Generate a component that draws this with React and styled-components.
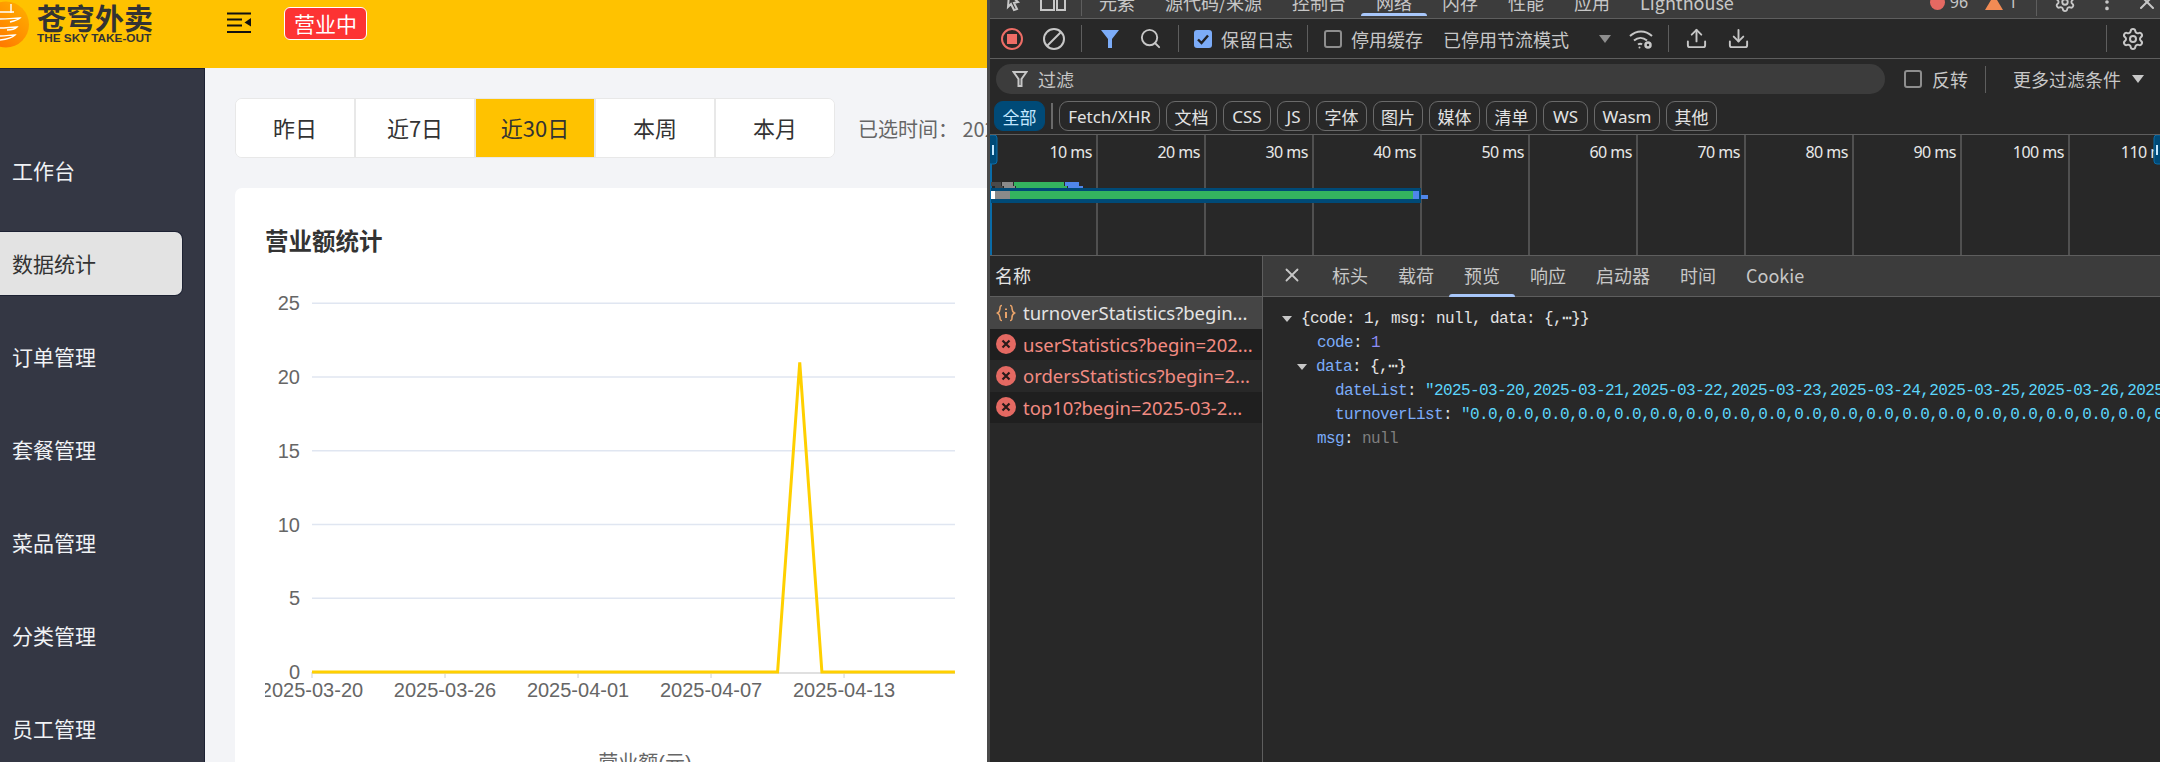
import React from "react";
import styled, { createGlobalStyle } from "styled-components";
import { Search, Settings, Upload, Download, X, EllipsisVertical } from "lucide-react";

const UI_FONT = `"Noto Sans", "Noto Sans CJK SC", sans-serif`;
const CJK_FONT = `"Noto Sans CJK SC", "Noto Sans", sans-serif`;

const GlobalStyle = createGlobalStyle`
  html, body {
    margin: 0;
    padding: 0;
    background: #282828;
    overflow: hidden;
  }
  * {
    box-sizing: border-box;
  }
`;

const Page = styled.div`
  display: flex;
  width: 2160px;
  height: 762px;
  overflow: hidden;
  font-family: ${CJK_FONT};
`;

/* ---------- left: the admin page ---------- */

const AdminApp = styled.div`
  width: 987px;
  height: 762px;
  flex: none;
  display: flex;
  flex-direction: column;
  overflow: hidden;
  background: #f3f4f7;
`;

const TopBar = styled.header`
  height: 68px;
  flex: none;
  display: flex;
  align-items: flex-start;
  background: #ffc200;
`;

const LogoMark = styled.svg`
  width: 30px;
  height: 48px;
  flex: none;
`;

const LogoText = styled.div`
  margin: 3px 0 0 7px;
  width: 119px;
  flex: none;
  color: #333;
`;

const LogoName = styled.div`
  font-size: 29px;
  line-height: 29px;
  font-weight: 700;
  white-space: nowrap;
`;

const LogoSub = styled.div`
  font-family: "Liberation Sans", sans-serif;
  font-size: 11.8px;
  line-height: 12px;
  font-weight: 700;
  white-space: nowrap;
`;

const MenuToggle = styled.svg`
  width: 24px;
  height: 22px;
  margin: 12px 0 0 71px;
  flex: none;
`;

const StatusBadge = styled.div`
  margin: 7px 0 0 33px;
  width: 83px;
  height: 33px;
  flex: none;
  display: flex;
  align-items: center;
  justify-content: center;
  padding-bottom: 1px;
  background: #fd3333;
  border: 1px solid #fff;
  border-radius: 6px;
  color: #fff;
  font-size: 21px;
`;

const AdminBody = styled.div`
  flex: 1;
  display: flex;
  min-height: 0;
`;

const Sidebar = styled.nav`
  width: 205px;
  flex: none;
  padding-top: 70px;
  background: #343744;
  border-top: 1px solid #1d2233;
  border-right: 1px solid #1d2233;
  overflow: hidden;
`;

const NavItem = styled.div`
  width: 182px;
  height: 63px;
  margin-bottom: 30px;
  padding: 0 0 2px 12px;
  display: flex;
  align-items: center;
  font-size: 21px;
  color: ${(p) => (p.$active ? "#333" : "#f0f2f5")};
  background: ${(p) => (p.$active ? "#e3e3e3" : "transparent")};
  border-radius: ${(p) => (p.$active ? "0 7px 7px 0" : "0")};
  box-shadow: ${(p) => (p.$active ? "0 0 0 1px #1d2233" : "none")};
`;

const Main = styled.main`
  flex: 1;
  min-width: 0;
  padding: 30px 0 0 30px;
  overflow: hidden;
`;

const RangeRow = styled.div`
  display: flex;
  align-items: center;
  height: 60px;
  white-space: nowrap;
`;

const RangeTabs = styled.div`
  display: flex;
  width: 600px;
  height: 60px;
  flex: none;
  background: #fff;
  border: 1px solid #e8e8e8;
  border-radius: 7px;
  overflow: hidden;
`;

const RangeTab = styled.div`
  flex: 1;
  display: flex;
  align-items: center;
  justify-content: center;
  padding-bottom: 2px;
  font-size: 22px;
  color: #333;
  background: ${(p) => (p.$active ? "#ffc200" : "#fff")};
  border-left: ${(p) => (p.$first ? "none" : "2px solid #e8e8e8")};
`;

const RangeLabel = styled.div`
  margin-left: 23px;
  font-size: 20px;
  color: #666;
`;

const Card = styled.section`
  margin-top: 30px;
  height: 600px;
  padding: 40px 0 0 30px;
  background: #fff;
  border-radius: 7px 0 0 0;
`;

const CardTitle = styled.h2`
  margin: 0 0 13px;
  font-size: 23.5px;
  line-height: 24px;
  font-weight: 700;
  color: #333;
`;

const ChartSvg = styled.svg`
  display: block;
  width: 722px;
  height: 497px;
`;

const AxisText = styled.text`
  font-family: "Liberation Sans", "Noto Sans CJK SC", sans-serif;
  font-size: 20px;
  fill: #666;
`;

/* ---------- right: devtools ---------- */

const DevTools = styled.div`
  flex: 1;
  min-width: 0;
  height: 762px;
  display: flex;
  flex-direction: column;
  border-left: 3px solid #4a4a4a;
  background: #282828;
  color: #e3e3e3;
  font-family: ${CJK_FONT};
  font-size: 18px;
`;

const PanelBar = styled.div`
  height: 19px;
  flex: none;
  overflow: hidden;
  background: #3c3c3c;
  border-bottom: 1px solid #5e5e5e;
`;

const PanelBarInner = styled.div`
  display: flex;
  align-items: center;
  height: 28px;
  margin-top: -12px;
  padding-right: 18px;
  white-space: nowrap;
`;

const PanelGlyph = styled.span`
  width: ${(p) => p.$w}px;
  flex: none;
  display: flex;
  justify-content: center;
  color: #c7c7c7;
`;

const PanelTab = styled.div`
  position: relative;
  height: 28px;
  flex: none;
  padding: 0 15px;
  display: flex;
  align-items: center;
  color: #c7c7c7;
  font-size: 18px;
  &::after {
    content: "";
    display: ${(p) => (p.$active ? "block" : "none")};
    position: absolute;
    left: 0;
    right: 0;
    bottom: 0;
    height: 3px;
    border-radius: 3px 3px 0 0;
    background: #a8c7fa;
  }
`;

const Counter = styled.span`
  display: inline-flex;
  align-items: center;
  gap: 5px;
  font-family: ${UI_FONT};
  font-size: 16px;
  color: #c7c7c7;
  margin-left: ${(p) => p.$ml}px;
`;

const Toolbar = styled.div`
  height: 40px;
  flex: none;
  display: flex;
  align-items: center;
  padding: 0 6px 0 1px;
  border-bottom: 1px solid #5e5e5e;
  white-space: nowrap;
`;

const ToolButton = styled.span`
  width: ${(p) => p.$w || 42}px;
  height: 30px;
  flex: none;
  margin-left: ${(p) => p.$ml || 0}px;
  display: flex;
  align-items: center;
  justify-content: center;
  color: #c7c7c7;
`;

const ToolSep = styled.span`
  width: 1px;
  height: 27px;
  flex: none;
  background: #5e5e5e;
  margin: 0 ${(p) => p.$mr ?? 7}px 0 ${(p) => p.$ml ?? 7}px;
`;

const ToolSpacer = styled.span`
  flex: 1;
`;

const CheckField = styled.span`
  display: inline-flex;
  align-items: center;
  gap: ${(p) => p.$gap || 9}px;
  margin-left: ${(p) => p.$ml || 0}px;
  color: #c7c7c7;
  font-size: 18px;
`;

const CheckBox = styled.span`
  width: 18px;
  height: 18px;
  flex: none;
  display: flex;
  align-items: center;
  justify-content: center;
  border-radius: 3px;
  border: ${(p) => (p.$checked ? "none" : "2px solid #8e8e8e")};
  background: ${(p) => (p.$checked ? "#7cacf8" : "transparent")};
`;

const ToolText = styled.span`
  margin-left: ${(p) => p.$ml || 0}px;
  color: #c7c7c7;
`;

const DownCaret = styled.span`
  width: 0;
  height: 0;
  flex: none;
  margin-left: ${(p) => p.$ml}px;
  border-left: 6px solid transparent;
  border-right: 6px solid transparent;
  border-top: 8px solid ${(p) => p.$color};
`;

const FilterRow = styled.div`
  height: 40px;
  flex: none;
  display: flex;
  align-items: center;
  padding: 0 0 0 6px;
  white-space: nowrap;
`;

const FilterInput = styled.div`
  width: 889px;
  height: 30px;
  flex: none;
  display: flex;
  align-items: center;
  gap: 10px;
  padding-left: 16px;
  border-radius: 15px;
  background: #3c3c3c;
  color: #c7c7c7;
`;

const ChipRow = styled.div`
  height: 36px;
  flex: none;
  display: flex;
  align-items: flex-start;
  gap: 6px;
  padding: 2px 0 0 4px;
  border-bottom: 1px solid #5e5e5e;
`;

const Chip = styled.span`
  width: ${(p) => p.$w}px;
  height: 30px;
  flex: none;
  display: flex;
  align-items: center;
  justify-content: center;
  border-radius: 9px;
  font-family: ${UI_FONT};
  font-size: 17px;
  white-space: nowrap;
  color: ${(p) => (p.$active ? "#c2e7ff" : "#e3e3e3")};
  background: ${(p) => (p.$active ? "#004a77" : "transparent")};
  border: 1px solid ${(p) => (p.$active ? "#004a77" : "#6a6a6a")};
`;

const ChipSep = styled.span`
  width: 2px;
  height: 26px;
  margin-top: 2px;
  flex: none;
  background: #6a6a6a;
`;

const Overview = styled.div`
  position: relative;
  height: 121px;
  flex: none;
  display: flex;
  overflow: hidden;
  border-bottom: 1px solid #5e5e5e;
`;

const OverviewCol = styled.div`
  width: 108px;
  flex: none;
  padding: 5px 4px 0 0;
  text-align: right;
  font-family: ${UI_FONT};
  font-size: 16px;
  letter-spacing: -0.5px;
  line-height: 24px;
  color: #e8e8e8;
  border-right: 2px solid #505050;
  white-space: nowrap;
`;

const OverviewBars = styled.svg`
  position: absolute;
  left: 0;
  top: 0;
  width: 1170px;
  height: 121px;
`;

const Split = styled.div`
  flex: 1;
  min-height: 0;
  display: flex;
`;

const RequestPane = styled.div`
  width: 273px;
  flex: none;
  border-right: 1px solid #5e5e5e;
`;

const RequestHead = styled.div`
  height: 41px;
  padding: 0 0 3px 5px;
  display: flex;
  align-items: center;
  border-bottom: 1px solid #5e5e5e;
  color: #e3e3e3;
`;

const RequestRow = styled.div`
  height: 31.5px;
  display: flex;
  align-items: center;
  gap: 7px;
  padding-left: 6px;
  font-family: ${UI_FONT};
  font-size: 18.5px;
  white-space: nowrap;
  overflow: hidden;
  color: ${(p) => (p.$error ? "#f28b82" : "#e3e3e3")};
  background: ${(p) => p.$bg};
`;

const RequestIcon = styled.svg`
  width: 20px;
  height: 20px;
  flex: none;
`;

const DetailPane = styled.div`
  flex: 1;
  min-width: 0;
  overflow: hidden;
`;

const DetailTabs = styled.div`
  height: 41px;
  display: flex;
  align-items: stretch;
  background: #3c3c3c;
  border-bottom: 1px solid #5e5e5e;
`;

const DetailClose = styled.span`
  width: 54px;
  padding: 0 0 3px 3px;
  display: flex;
  align-items: center;
  justify-content: center;
  color: #c7c7c7;
`;

const DetailTab = styled.div`
  position: relative;
  padding: 0 15px 3px;
  display: flex;
  align-items: center;
  color: #c7c7c7;
  font-size: 18px;
  &::after {
    content: "";
    display: ${(p) => (p.$active ? "block" : "none")};
    position: absolute;
    left: 0;
    right: 0;
    bottom: -1px;
    height: 3px;
    border-radius: 3px 3px 0 0;
    background: #a8c7fa;
  }
`;

const Preview = styled.div`
  padding-top: 10px;
  font-family: "Liberation Mono", monospace;
  font-size: 16px;
  letter-spacing: -0.6px;
  line-height: 24px;
`;

const PreviewLine = styled.div`
  display: flex;
  align-items: center;
  height: 24px;
  padding-left: ${(p) => p.$indent}px;
  white-space: pre;
  color: #e3e3e3;
`;

const Fold = styled.span`
  width: 0;
  height: 0;
  flex: none;
  margin-left: -20px;
  margin-right: 9px;
  border-left: 5.5px solid transparent;
  border-right: 5.5px solid transparent;
  border-top: 6px solid #c7c7c7;
`;

const Key = styled.span`
  color: #7cacf8;
`;

const Num = styled.span`
  color: #8d8df5;
`;

const Str = styled.span`
  color: #5cd5fb;
`;

const Nil = styled.span`
  color: #7f7f7f;
`;

const MENU = ["工作台", "数据统计", "订单管理", "套餐管理", "菜品管理", "分类管理", "员工管理"];
const RANGES = ["昨日", "近7日", "近30日", "本周", "本月"];
const PANELS = ["元素", "源代码/来源", "控制台", "网络", "内存", "性能", "应用", "Lighthouse"];
const CHIPS = [
  { label: "Fetch/XHR", w: 101 },
  { label: "文档", w: 51 },
  { label: "CSS", w: 48 },
  { label: "JS", w: 33 },
  { label: "字体", w: 51 },
  { label: "图片", w: 50 },
  { label: "媒体", w: 51 },
  { label: "清单", w: 51 },
  { label: "WS", w: 45 },
  { label: "Wasm", w: 66 },
  { label: "其他", w: 51 },
];
const DETAIL_TABS = ["标头", "载荷", "预览", "响应", "启动器", "时间", "Cookie"];
const REQUESTS = [
  { name: "turnoverStatistics?begin...", bg: "#454545" },
  { name: "userStatistics?begin=202...", bg: "#1f1f1f", error: true },
  { name: "ordersStatistics?begin=2...", bg: "#282828", error: true },
  { name: "top10?begin=2025-03-2...", bg: "#1f1f1f", error: true },
];

// 30 days from 03-20, same list the api returned
const DATES = Array.from({ length: 30 }, (_, i) => {
  const d = new Date(Date.UTC(2025, 2, 20 + i));
  return d.toISOString().slice(0, 10);
});

const chartX = (i) => 47 + i * 22.17;
const chartY = (v) => 407 - v * 14.75;
const linePoints = DATES.map((_, i) => `${chartX(i)},${chartY(i === 22 ? 21 : 0)}`).join(" ");

const RevenueChart = () => (
  <ChartSvg viewBox="0 0 722 497">
    {[5, 10, 15, 20, 25].map((v) => (
      <line key={v} x1="47" x2="690" y1={chartY(v)} y2={chartY(v)} stroke="#e0e6f1" strokeWidth="1.5" />
    ))}
    {[0, 5, 10, 15, 20, 25].map((v) => (
      <AxisText key={v} x="35" y={chartY(v) + 7} textAnchor="end">
        {v}
      </AxisText>
    ))}
    <line x1="47" x2="690" y1="408" y2="408" stroke="#e0e0e0" strokeWidth="2" />
    {[0, 6, 12, 18, 24].map((i) => (
      <g key={i}>
        <line x1={chartX(i)} x2={chartX(i)} y1="407" y2="413" stroke="#e0e0e0" strokeWidth="1.5" />
        <AxisText x={chartX(i)} y="432" textAnchor="middle">
          {DATES[i]}
        </AxisText>
      </g>
    ))}
    <polyline points={linePoints} fill="none" stroke="#ffd000" strokeWidth="3" />
    <AxisText x="380" y="505" textAnchor="middle">
      营业额(元)
    </AxisText>
  </ChartSvg>
);

const RecordIcon = () => (
  <svg width="24" height="24" viewBox="0 0 24 24">
    <circle cx="12" cy="12" r="10" fill="none" stroke="#ee6d66" strokeWidth="2" />
    <rect x="7" y="7" width="10" height="10" fill="#ee6d66" />
  </svg>
);

const ClearIcon = () => (
  <svg width="24" height="24" viewBox="0 0 24 24" fill="none" stroke="#c7c7c7" strokeWidth="2">
    <circle cx="12" cy="12" r="10" />
    <line x1="5" y1="19" x2="19" y2="5" />
  </svg>
);

const FunnelFilled = () => (
  <svg width="20" height="22" viewBox="0 0 20 22">
    <path d="M1 2h18l-7 9v9h-4v-9z" fill="#7cacf8" />
  </svg>
);

const FunnelOutline = () => (
  <svg width="16" height="18" viewBox="0 0 16 18" fill="none" stroke="#c7c7c7" strokeWidth="2">
    <path d="M1.5 2h13l-5 7v7h-3v-7z" />
  </svg>
);

const CheckMark = () => (
  <svg width="14" height="14" viewBox="0 0 14 14" fill="none" stroke="#202124" strokeWidth="2.4">
    <path d="M2 7.5l3.5 3.5L12 3.5" />
  </svg>
);

const WifiGear = () => (
  <svg width="26" height="26" viewBox="0 0 26 26" fill="none" stroke="#c7c7c7" strokeWidth="2">
    <path d="M2 10c6.500-6 15.500-6 22 0" />
    <path d="M6 14.500c4-3.500 9-3.500 13 0" />
    <path d="M10 18.500c1.500-1 3-1 4 0" />
    <circle cx="11.500" cy="21.500" r="1" fill="#c7c7c7" stroke="none" />
    <circle cx="20" cy="19" r="2.500" strokeWidth="2.500" />
  </svg>
);

const ErrorIcon = () => (
  <RequestIcon viewBox="0 0 20 20">
    <circle cx="10" cy="10" r="10" fill="#e46962" />
    <path d="M6.500 6.500l7 7M13.500 6.500l-7 7" stroke="#2a1b1a" strokeWidth="2.200" />
  </RequestIcon>
);

const JsonIcon = () => (
  <RequestIcon viewBox="0 0 20 20" fill="none" stroke="#e8a36a" strokeWidth="1.600">
    <path d="M6 2.500c-2 0-2 1-2 3s0 3-2.500 4.500C4 11.500 4 12.500 4 14.500s0 3 2 3" />
    <path d="M14 2.500c2 0 2 1 2 3s0 3 2.500 4.500c-2.500 1.500-2.500 2.500-2.500 4.500s0 3-2 3" />
    <path d="M10 9v6M10 5.500v1.500" strokeWidth="2" />
  </RequestIcon>
);

const OverviewGraph = () => (
  <OverviewBars viewBox="0 0 1170 121">
    <rect x="0" y="0" width="2" height="121" fill="#0a6ca8" />
    <rect x="-2" y="0" width="9" height="29" rx="3" fill="#004a77" stroke="#0a6ca8" />
    <rect x="2" y="10" width="2" height="10" fill="#c2e7ff" />
    <rect x="1164" y="0" width="9" height="29" rx="3" fill="#004a77" stroke="#0a6ca8" />
    <rect x="1166" y="10" width="2" height="10" fill="#c2e7ff" />

    <rect x="1" y="47" width="10" height="4" fill="#4a4a4a" />
    <rect x="12" y="47" width="11" height="4" fill="#8a8a8a" />
    <rect x="24" y="47" width="50" height="4" fill="#34b35f" />
    <rect x="75" y="47" width="14" height="4" fill="#4f86ea" />
    <rect x="5" y="51" width="8" height="3" fill="#4a4a4a" />
    <rect x="14" y="51" width="11" height="3" fill="#8a8a8a" />
    <rect x="26" y="51" width="51" height="3" fill="#34b35f" />
    <rect x="78" y="51" width="15" height="3" fill="#4f86ea" />

    <rect x="1" y="53" width="430" height="15" fill="#004a77" />
    <rect x="1" y="56" width="4" height="8" fill="#fff" />
    <rect x="5" y="56" width="15" height="8" fill="#8a8a8a" />
    <rect x="20" y="56" width="403" height="8" fill="#34b35f" />
    <rect x="423" y="56" width="6" height="8" fill="#4f86ea" />
    <rect x="431" y="60" width="7" height="4" fill="#4f86ea" />
  </OverviewBars>
);

const App = () => (
  <Page>
    <GlobalStyle />
    <AdminApp>
      <TopBar>
        <LogoMark viewBox="0 0 30 48">
          <defs>
            <linearGradient id="logoFill" x1="1" y1="0" x2="0" y2="1">
              <stop offset="0" stopColor="#ffb300" />
              <stop offset="1" stopColor="#ff6a00" />
            </linearGradient>
          </defs>
          <circle cx="6" cy="24.500" r="23" fill="url(#logoFill)" />
          <path
            d="M0 12h14M11 4v9M0 19c8 0 16-1 20-1-2 2-6 3-10 4M0 28c6 0 12-1 17-1-2 2-6 3-10 3M0 36c6 0 11-1 15-1-2 2-5 4-15 5"
            fill="none"
            stroke="#fff"
            strokeWidth="1.400"
          />
        </LogoMark>
        <LogoText>
          <LogoName>苍穹外卖</LogoName>
          <LogoSub>THE SKY TAKE-OUT</LogoSub>
        </LogoText>
        <MenuToggle viewBox="0 0 24 22">
          <rect x="0" y="0.500" width="24" height="2" fill="#111" />
          <rect x="0" y="6.500" width="15" height="2" fill="#111" />
          <rect x="0" y="12.500" width="15" height="2" fill="#111" />
          <rect x="0" y="19" width="24" height="2" fill="#111" />
          <path d="M24 6v8.500L17.500 10.500z" fill="#111" />
        </MenuToggle>
        <StatusBadge>营业中</StatusBadge>
      </TopBar>
      <AdminBody>
        <Sidebar>
          {MENU.map((m) => (
            <NavItem key={m} $active={m === "数据统计"}>
              {m}
            </NavItem>
          ))}
        </Sidebar>
        <Main>
          <RangeRow>
            <RangeTabs>
              {RANGES.map((r, i) => (
                <RangeTab key={r} $first={i === 0} $active={r === "近30日"}>
                  {r}
                </RangeTab>
              ))}
            </RangeTabs>
            <RangeLabel>已选时间： 2025-03-20 至 2025-04-18</RangeLabel>
          </RangeRow>
          <Card>
            <CardTitle>营业额统计</CardTitle>
            <RevenueChart />
          </Card>
        </Main>
      </AdminBody>
    </AdminApp>

    <DevTools>
      <PanelBar>
        <PanelBarInner>
          <PanelGlyph $w={42}>
            <svg width="22" height="22" viewBox="0 0 22 22" fill="none" stroke="#c7c7c7" strokeWidth="2">
              <path d="M9 3l9 8-4 1 3 6-3 1-3-6-3 3z" />
            </svg>
          </PanelGlyph>
          <PanelGlyph $w={42}>
            <svg width="26" height="20" viewBox="0 0 26 20" fill="none" stroke="#c7c7c7" strokeWidth="2">
              <rect x="1" y="2" width="13" height="16" />
              <rect x="17" y="6" width="8" height="12" />
            </svg>
          </PanelGlyph>
          <ToolSep $ml={7} $mr={2} />
          {PANELS.map((p) => (
            <PanelTab key={p} $active={p === "网络"}>
              {p}
            </PanelTab>
          ))}
          <Counter $ml={181}>
            <svg width="15" height="15" viewBox="0 0 15 15">
              <circle cx="7.500" cy="7.500" r="7.500" fill="#e46962" />
            </svg>
            96
          </Counter>
          <Counter $ml={17}>
            <svg width="18" height="15" viewBox="0 0 18 15">
              <path d="M9 0l9 15H0z" fill="#f28b54" />
            </svg>
            1
          </Counter>
          <ToolSep $ml={19} $mr={0} />
          <PanelGlyph $w={56}>
            <Settings size={22} />
          </PanelGlyph>
          <PanelGlyph $w={28}>
            <EllipsisVertical size={22} />
          </PanelGlyph>
          <PanelGlyph $w={52}>
            <X size={24} />
          </PanelGlyph>
        </PanelBarInner>
      </PanelBar>

      <Toolbar>
        <ToolButton>
          <RecordIcon />
        </ToolButton>
        <ToolButton $w={41}>
          <ClearIcon />
        </ToolButton>
        <ToolSep />
        <ToolButton $w={41}>
          <FunnelFilled />
        </ToolButton>
        <ToolButton $w={41}>
          <Search size={23} strokeWidth={2} />
        </ToolButton>
        <ToolSep $ml={7} $mr={0} />
        <CheckField $ml={15}>
          <CheckBox $checked>
            <CheckMark />
          </CheckBox>
          保留日志
        </CheckField>
        <ToolSep $ml={14} $mr={0} />
        <CheckField $ml={16}>
          <CheckBox />
          停用缓存
        </CheckField>
        <ToolText $ml={20}>已停用节流模式</ToolText>
        <DownCaret $ml={30} $color="#8e8e8e" />
        <ToolButton $ml={9}>
          <WifiGear />
        </ToolButton>
        <ToolSep $ml={6} $mr={6} />
        <ToolButton>
          <Upload size={23} strokeWidth={2} />
        </ToolButton>
        <ToolButton>
          <Download size={23} strokeWidth={2} />
        </ToolButton>
        <ToolSpacer />
        <ToolSep $ml={0} $mr={5} />
        <ToolButton>
          <Settings size={24} strokeWidth={2} />
        </ToolButton>
      </Toolbar>

      <FilterRow>
        <FilterInput>
          <FunnelOutline />
          过滤
        </FilterInput>
        <CheckField $ml={19} $gap={10}>
          <CheckBox />
          反转
        </CheckField>
        <ToolSep $ml={17} $mr={0} />
        <ToolText $ml={27}>更多过滤条件</ToolText>
        <DownCaret $ml={11} $color="#c7c7c7" />
      </FilterRow>

      <ChipRow>
        <Chip $active $w={51}>
          全部
        </Chip>
        <ChipSep />
        {CHIPS.map((c) => (
          <Chip key={c.label} $w={c.w}>
            {c.label}
          </Chip>
        ))}
      </ChipRow>

      <Overview>
        {Array.from({ length: 11 }, (_, i) => (
          <OverviewCol key={i}>{(i + 1) * 10} ms</OverviewCol>
        ))}
        <OverviewGraph />
      </Overview>

      <Split>
        <RequestPane>
          <RequestHead>名称</RequestHead>
          {REQUESTS.map((r) => (
            <RequestRow key={r.name} $bg={r.bg} $error={r.error}>
              {r.error ? <ErrorIcon /> : <JsonIcon />}
              {r.name}
            </RequestRow>
          ))}
        </RequestPane>
        <DetailPane>
          <DetailTabs>
            <DetailClose>
              <X size={22} />
            </DetailClose>
            {DETAIL_TABS.map((t) => (
              <DetailTab key={t} $active={t === "预览"}>
                {t}
              </DetailTab>
            ))}
          </DetailTabs>
          <Preview>
            <PreviewLine $indent={39}>
              <Fold />
              {"{code: 1, msg: null, data: {,⋯}}"}
            </PreviewLine>
            <PreviewLine $indent={54}>
              <Key>code</Key>: <Num>1</Num>
            </PreviewLine>
            <PreviewLine $indent={54}>
              <Fold />
              <Key>data</Key>: {"{,⋯}"}
            </PreviewLine>
            <PreviewLine $indent={72}>
              <Key>dateList</Key>: <Str>"{DATES.join(",")}"</Str>
            </PreviewLine>
            <PreviewLine $indent={72}>
              <Key>turnoverList</Key>:{" "}
              <Str>"{DATES.map((_, i) => (i === 22 ? "21.0" : "0.0")).join(",")}"</Str>
            </PreviewLine>
            <PreviewLine $indent={54}>
              <Key>msg</Key>: <Nil>null</Nil>
            </PreviewLine>
          </Preview>
        </DetailPane>
      </Split>
    </DevTools>
  </Page>
);

export default App;
